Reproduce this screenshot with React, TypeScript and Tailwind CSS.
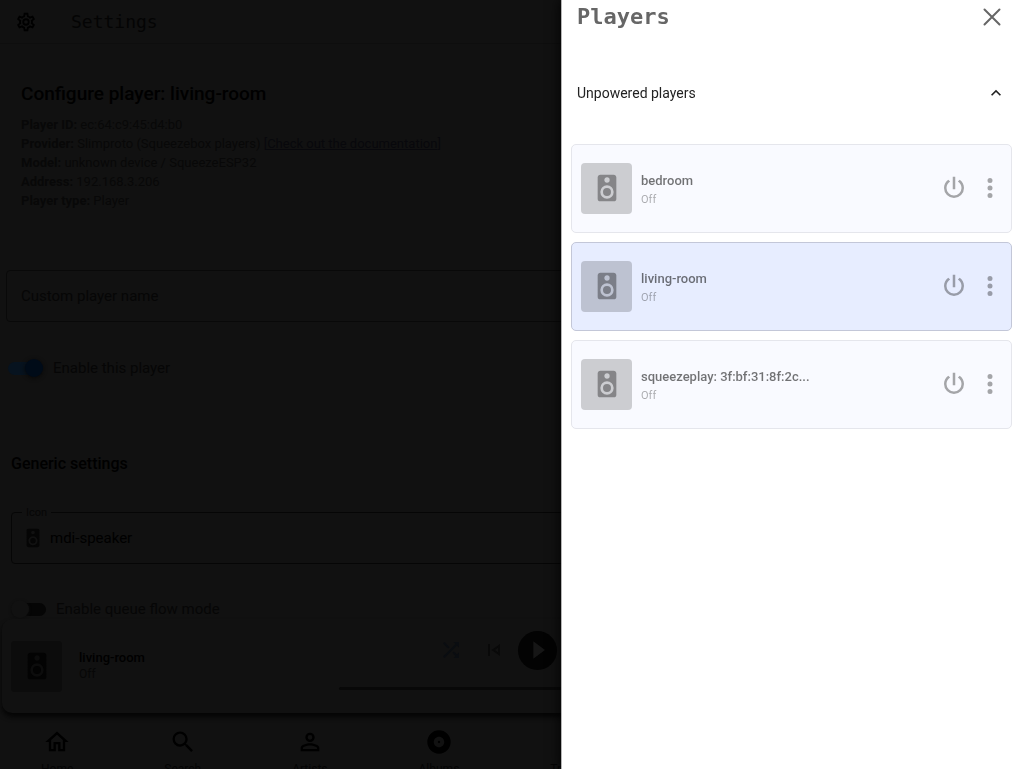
import { useState } from 'react';

const icons = {
  speaker:
    'M12,12A3,3 0 0,0 9,15A3,3 0 0,0 12,18A3,3 0 0,0 15,15A3,3 0 0,0 12,12M12,20A5,5 0 0,1 7,15A5,5 0 0,1 12,10A5,5 0 0,1 17,15A5,5 0 0,1 12,20M12,4A2,2 0 0,1 14,6A2,2 0 0,1 12,8C10.89,8 10,7.1 10,6C10,4.89 10.89,4 12,4M17,2H7C5.89,2 5,2.89 5,4V20A2,2 0 0,0 7,22H17A2,2 0 0,0 19,20V4C19,2.89 18.1,2 17,2Z',
  power:
    'M16.56,5.44L15.11,6.89C16.84,7.94 18,9.83 18,12A6,6 0 0,1 12,18A6,6 0 0,1 6,12C6,9.83 7.16,7.94 8.88,6.88L7.44,5.44C5.36,6.88 4,9.28 4,12A8,8 0 0,0 12,20A8,8 0 0,0 20,12C20,9.28 18.64,6.88 16.56,5.44M13,3H11V13H13',
  dots: 'M12,16A2,2 0 0,1 14,18A2,2 0 0,1 12,20A2,2 0 0,1 10,18A2,2 0 0,1 12,16M12,10A2,2 0 0,1 14,12A2,2 0 0,1 12,14A2,2 0 0,1 10,12A2,2 0 0,1 12,10M12,4A2,2 0 0,1 14,6A2,2 0 0,1 12,8A2,2 0 0,1 10,6A2,2 0 0,1 12,4Z',
  chevronUp: 'M7.41,15.41L12,10.83L16.59,15.41L18,14L12,8L6,14L7.41,15.41Z',
  cog: 'M12,8A4,4 0 0,1 16,12A4,4 0 0,1 12,16A4,4 0 0,1 8,12A4,4 0 0,1 12,8M12,10A2,2 0 0,0 10,12A2,2 0 0,0 12,14A2,2 0 0,0 14,12A2,2 0 0,0 12,10M10,22C9.75,22 9.54,21.82 9.5,21.58L9.13,18.93C8.5,18.68 7.96,18.34 7.44,17.94L4.95,18.95C4.73,19.03 4.46,18.95 4.34,18.73L2.34,15.27C2.21,15.05 2.27,14.78 2.46,14.63L4.57,12.97L4.5,12L4.57,11L2.46,9.37C2.27,9.22 2.21,8.95 2.34,8.73L4.34,5.27C4.46,5.05 4.73,4.96 4.95,5.05L7.44,6.05C7.96,5.66 8.5,5.32 9.13,5.07L9.5,2.42C9.54,2.18 9.75,2 10,2H14C14.25,2 14.46,2.18 14.5,2.42L14.87,5.07C15.5,5.32 16.04,5.66 16.56,6.05L19.05,5.05C19.27,4.96 19.54,5.05 19.66,5.27L21.66,8.73C21.79,8.95 21.73,9.22 21.54,9.37L19.43,11L19.5,12L19.43,13L21.54,14.63C21.73,14.78 21.79,15.05 21.66,15.27L19.66,18.73C19.54,18.95 19.27,19.04 19.05,18.95L16.56,17.95C16.04,18.34 15.5,18.68 14.87,18.93L14.5,21.58C14.46,21.82 14.25,22 14,22H10M11.25,4L10.88,6.61C9.68,6.86 8.62,7.5 7.85,8.39L5.44,7.35L4.69,8.65L6.8,10.2C6.4,11.37 6.4,12.64 6.8,13.8L4.68,15.36L5.43,16.66L7.86,15.62C8.63,16.5 9.68,17.14 10.87,17.38L11.24,20H12.76L13.13,17.39C14.32,17.14 15.37,16.5 16.14,15.62L18.57,16.66L19.32,15.36L17.2,13.81C17.6,12.64 17.6,11.37 17.2,10.2L19.31,8.65L18.56,7.35L16.15,8.39C15.38,7.5 14.32,6.86 13.12,6.62L12.75,4H11.25Z',
  home: 'M12 5.69L17 10.19V18H15V12H9V18H7V10.19L12 5.69M12 3L2 12H5V20H11V14H13V20H19V12H22L12 3Z',
  magnify:
    'M9.5,3A6.5,6.5 0 0,1 16,9.5C16,11.11 15.41,12.59 14.44,13.73L14.71,14H15.5L20.5,19L19,20.5L14,15.5V14.71L13.73,14.44C12.59,15.41 11.11,16 9.5,16A6.5,6.5 0 0,1 3,9.5A6.5,6.5 0 0,1 9.5,3M9.5,5C7,5 5,7 5,9.5C5,12 7,14 9.5,14C12,14 14,12 14,9.5C14,7 12,5 9.5,5Z',
  account:
    'M12,4A4,4 0 0,1 16,8A4,4 0 0,1 12,12A4,4 0 0,1 8,8A4,4 0 0,1 12,4M12,6A2,2 0 0,0 10,8A2,2 0 0,0 12,10A2,2 0 0,0 14,8A2,2 0 0,0 12,6M12,13C14.67,13 20,14.33 20,17V20H4V17C4,14.33 9.33,13 12,13M12,14.9C9.03,14.9 5.9,16.36 5.9,17V18.1H18.1V17C18.1,16.36 14.97,14.9 12,14.9Z',
  album:
    'M12,11A1,1 0 0,0 11,12A1,1 0 0,0 12,13A1,1 0 0,0 13,12A1,1 0 0,0 12,11M12,16.5C9.5,16.5 7.5,14.5 7.5,12C7.5,9.5 9.5,7.5 12,7.5C14.5,7.5 16.5,9.5 16.5,12C16.5,14.5 14.5,16.5 12,16.5M12,2A10,10 0 0,0 2,12A10,10 0 0,0 12,22A10,10 0 0,0 22,12A10,10 0 0,0 12,2Z',
  note: 'M12 3V13.55C11.41 13.21 10.73 13 10 13A4 4 0 1 0 14 17V7H18V3H12Z',
  shuffle:
    'M14.83,13.41L13.42,14.82L16.55,17.95L14.5,20H20V14.5L17.96,16.54L14.83,13.41M14.5,4L16.54,6.04L4,18.59L5.41,20L17.96,7.46L20,9.5V4M10.59,9.17L5.41,4L4,5.41L9.17,10.58L10.59,9.17Z',
  skipPrevious: 'M6,6H8V18H6M9.5,12L18,18V6M16,14.14L12.97,12L16,9.86V14.14Z',
};

type IconName = keyof typeof icons;

function Icon({ name, className }: { name: IconName; className: string }) {
  return (
    <svg viewBox="0 0 24 24" fill="currentColor" aria-hidden="true" className={className}>
      <path d={icons[name]} />
    </svg>
  );
}

const players = [
  { id: 'bedroom', name: 'bedroom', state: 'Off' },
  { id: 'living-room', name: 'living-room', state: 'Off' },
  { id: 'squeezeplay', name: 'squeezeplay: 3f:bf:31:8f:2c...', state: 'Off' },
];

const navItems: { label: string; icon: IconName }[] = [
  { label: 'Home', icon: 'home' },
  { label: 'Search', icon: 'magnify' },
  { label: 'Artists', icon: 'account' },
  { label: 'Albums', icon: 'album' },
  { label: 'Tracks', icon: 'note' },
];

function Switch({ id, label, defaultChecked }: { id: string; label: string; defaultChecked?: boolean }) {
  return (
    <div className="flex h-6 items-center gap-[10px]">
      <input
        id={id}
        type="checkbox"
        role="switch"
        defaultChecked={defaultChecked}
        className="relative h-[13px] w-[35px] appearance-none rounded-full bg-[#050505] before:absolute before:-top-[3px] before:left-0 before:size-[18px] before:rounded-full before:bg-[#111111] before:shadow-[0_1px_3px_#0d0d0d] checked:bg-[#07131f] checked:before:left-[17px] checked:before:bg-[#000b18] checked:before:shadow-[0_1px_4px_#080808]"
      />
      <label htmlFor={id} className="text-[15px] leading-5 text-[#060606]">
        {label}
      </label>
    </div>
  );
}

function PlayerInfo() {
  return (
    <div className="text-[13px] leading-[19px] text-[#080808]">
      <p>
        <b>Player ID:</b> ec:64:c9:45:d4:b0
      </p>
      <p>
        <b>Provider:</b> Slimproto (Squeezebox players){' '}
        <a href="#documentation" className="text-[#08080c]">
          [<span className="underline">Check out the documentation</span>]
        </a>
      </p>
      <p>
        <b>Model:</b> unknown device / SqueezeESP32
      </p>
      <p>
        <b>Address:</b> 192.168.3.206
      </p>
      <p>
        <b>Player type:</b> Player
      </p>
    </div>
  );
}

function SettingsPage() {
  return (
    <main className="min-h-0 flex-1 overflow-hidden">
      <section className="px-[21px] pt-[38px]">
        <h1 className="mb-[9px] text-[19px] leading-6 font-medium text-black">
          Configure player: living-room
        </h1>
        <PlayerInfo />
      </section>
      <div className="mt-[60px] px-[6px]">
        <input
          aria-label="Custom player name"
          placeholder="Custom player name"
          className="h-[52px] w-full rounded border border-[#090909] bg-transparent px-[14px] text-[15px] placeholder:text-[#060606]"
        />
      </div>
      <div className="mt-[34px] pl-2">
        <Switch id="enabled" label="Enable this player" defaultChecked />
      </div>
      <section className="px-[11px] pt-[72px]">
        <h2 className="text-base leading-6 font-medium text-black">Generic settings</h2>
        <div className="relative mt-9 flex h-[52px] items-center rounded border border-[#060606] pl-[10px]">
          <label
            htmlFor="icon"
            className="absolute -top-2 left-[10px] bg-[#111111] px-1 text-[11px] leading-4 text-[#060606]"
          >
            Icon
          </label>
          <Icon name="speaker" className="size-[22px] text-[#050505]" />
          <input
            id="icon"
            defaultValue="mdi-speaker"
            className="min-w-0 flex-1 bg-transparent pl-[6px] text-[15px] text-black"
          />
        </div>
        <div className="mt-[33px]">
          <Switch id="flow-mode" label="Enable queue flow mode" />
        </div>
      </section>
    </main>
  );
}

function PlayerBar() {
  return (
    <section className="mx-[2px] mb-[5px] grid h-[94px] shrink-0 grid-cols-[337px_1fr_337px] items-center rounded-[10px] bg-[#111111] shadow-[0_4px_5px_#050505]">
      <div className="flex items-center gap-[17px] pl-[9px]">
        <div className="flex size-[51px] items-center justify-center rounded bg-[#0c0c0c]">
          <Icon name="speaker" className="size-8 text-[#030303]" />
        </div>
        <div>
          <p className="text-[13px] leading-4 font-medium text-black">living-room</p>
          <p className="text-xs leading-4 text-[#070707]">Off</p>
        </div>
      </div>
      <div className="flex flex-col gap-[17px] pb-3">
        <div className="flex items-center justify-center gap-3 pr-7">
          <button aria-label="Shuffle" className="mr-[7px] text-[#0a0d11]">
            <Icon name="shuffle" className="size-6" />
          </button>
          <button aria-label="Previous" className="text-[#090909]">
            <Icon name="skipPrevious" className="size-6" />
          </button>
          <button
            aria-label="Play"
            className="flex size-[39px] items-center justify-center rounded-full bg-[#030303]"
          >
            <svg viewBox="0 0 24 24" className="size-7" fill="#161616" aria-hidden="true">
              <path d="M8 4.5v15l10-7.5z" />
            </svg>
          </button>
        </div>
        <div className="h-[3px] rounded-full bg-[#080808]" />
      </div>
    </section>
  );
}

function BottomNav() {
  return (
    <nav className="-ml-1 flex h-[51px] shrink-0 items-start gap-px overflow-hidden pt-[10px]">
      {navItems.map((item) => (
        <button key={item.label} className="flex shrink-0 flex-col items-center px-[45px] text-black">
          <Icon name={item.icon} className="size-7" />
          <span className="mt-[5px] text-xs leading-4 text-[#050505]">{item.label}</span>
        </button>
      ))}
    </nav>
  );
}

function PlayerCard({ player, selected }: { player: (typeof players)[number]; selected: boolean }) {
  return (
    <li
      className={
        selected
          ? 'flex h-[89px] items-center rounded-[5px] border border-[#c3c7d8] bg-[#e7edff] px-[9px] pb-px'
          : 'flex h-[89px] items-center rounded-[5px] border border-[#e5e6ec] bg-[#f9faff] px-[9px] pb-px'
      }
    >
      <div className="flex size-[51px] shrink-0 items-center justify-center rounded bg-black/18">
        <Icon name="speaker" className="size-8 text-black/35" />
      </div>
      <div className="min-w-0 flex-1 pt-[3px] pl-[9px]">
        <p className="truncate text-[13px] leading-5 font-medium text-black/55">{player.name}</p>
        <p className="text-[11px] leading-[18px] text-black/32">{player.state}</p>
      </div>
      <div className="-mr-[3px] flex gap-[6px] text-black/34">
        <button aria-label={`Power ${player.name}`}>
          <Icon name="power" className="size-[30px]" />
        </button>
        <button aria-label={`Menu ${player.name}`}>
          <Icon name="dots" className="size-[30px]" />
        </button>
      </div>
    </li>
  );
}

function PlayersDrawer() {
  const [expanded, setExpanded] = useState(true);

  return (
    <aside className="fixed inset-y-0 right-0 w-[463px] max-w-full border-l border-[#b5b5b5] bg-white pr-3 pl-[9px] shadow-[0_0_12px_#000000]">
      <header className="flex h-[33px] items-center justify-between pr-[11px] pl-[6px]">
        <h2 className="font-['DejaVu_Sans_Mono',monospace] text-[22px] font-bold text-[#666666]">
          Players
        </h2>
        <button aria-label="Close">
          <svg viewBox="0 0 18 18" className="size-[18px]" fill="none" stroke="#666666" strokeWidth="2" strokeLinecap="round">
            <path d="M1.5 1.5l15 15M16.5 1.5l-15 15" />
          </svg>
        </button>
      </header>
      <button
        aria-expanded={expanded}
        onClick={() => setExpanded(!expanded)}
        className="mt-9 flex h-12 w-full items-center justify-between pr-[6px] pl-[6px] text-sm text-[#222222]"
      >
        Unpowered players
        <Icon name="chevronUp" className="size-5" />
      </button>
      {expanded && (
        <ul className="mt-[27px] flex flex-col gap-[9px]">
          {players.map((player) => (
            <PlayerCard key={player.id} player={player} selected={player.id === 'living-room'} />
          ))}
        </ul>
      )}
    </aside>
  );
}

export default function App() {
  return (
    <div className="flex h-screen flex-col overflow-hidden bg-[#111111] font-[Roboto,sans-serif]">
      <header className="flex h-11 shrink-0 items-center gap-[34px] border-b border-[#0e0e0e] pl-[15px] text-black">
        <Icon name="cog" className="size-[22px]" />
        <span className="font-['DejaVu_Sans_Mono',monospace] text-lg text-[#040404]">Settings</span>
      </header>
      <SettingsPage />
      <PlayerBar />
      <BottomNav />
      <PlayersDrawer />
    </div>
  );
}
